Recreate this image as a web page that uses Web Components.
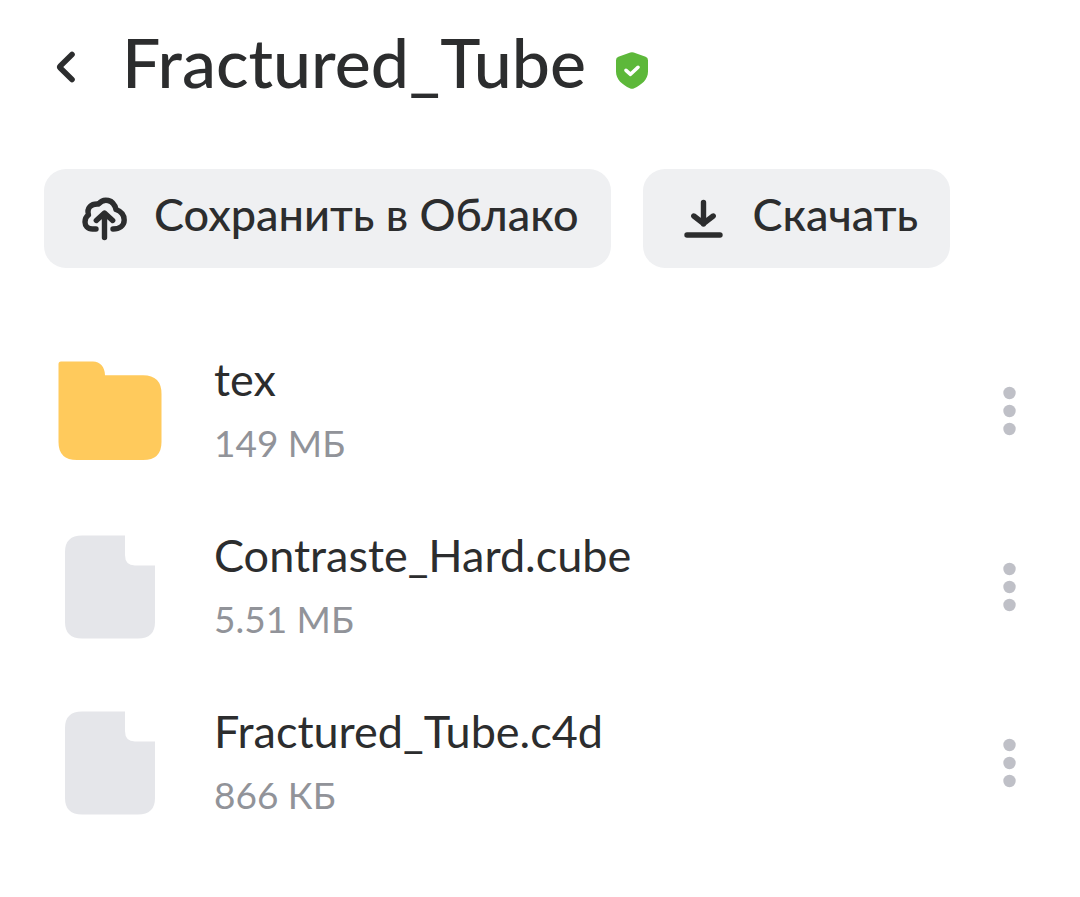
<!DOCTYPE html>
<html lang="ru">
<head>
<meta charset="utf-8">
<meta name="viewport" content="width=device-width, initial-scale=1">
<title>Fractured_Tube</title>
<style>
    :root {
        --text: #2c2d2e;
        --text-muted: #919399;
        --button: #eff0f2;
        --dots: #bfc0c7;
    }

    body {
        margin: 0;
        background: #fff;
        color: var(--text);
        font-family: Lato, "Noto Sans", sans-serif;
    }
</style>
</head>
<body>
<cloud-page>
    <cloud-header slot="header">Fractured_Tube</cloud-header>
    <cloud-button slot="actions" icon="cloud">Сохранить в Облако</cloud-button>
    <cloud-button slot="actions" icon="download">Скачать</cloud-button>
    <cloud-item type="folder">tex<span slot="size">149 МБ</span></cloud-item>
    <cloud-item type="file">Contraste_Hard.cube<span slot="size">5.51 МБ</span></cloud-item>
    <cloud-item type="file">Fractured_Tube.c4d<span slot="size">866 КБ</span></cloud-item>
</cloud-page>

<script>
const icons = {
    back: `
        <svg width="32" height="48" viewBox="0 0 32 48" aria-hidden="true">
            <path d="M20 11.500 L8.300 23 Q7.300 24 8.300 25 L20 36.500" fill="none" stroke="currentColor" stroke-width="5.600" stroke-linecap="round" stroke-linejoin="round"/>
        </svg>`,
    shield: `
        <svg width="32" height="37" viewBox="0 0 32 37" role="img" aria-label="Проверено">
            <path d="M14.3 .6 Q16 -.1 17.7 .6 L29.6 4.8 Q32 5.7 32 8.3 V19.5 C32 27.5 25.5 33 18.2 36.2 Q16 37.2 13.8 36.2 C6.5 33 0 27.5 0 19.5 V8.3 Q0 5.7 2.4 4.8 Z" fill="#5db83a"/>
            <path d="M10 18.3 L14.5 22.3 L22 15.3" fill="none" stroke="#fff" stroke-width="3.600" stroke-linecap="round" stroke-linejoin="round"/>
        </svg>`,
    cloud: `
        <svg width="48" height="48" viewBox="0 0 48 48" aria-hidden="true">
            <g fill="none" stroke="currentColor" stroke-width="5.4" stroke-linecap="round" stroke-linejoin="round">
                <path d="M16 34 H12.5 C7.5 34 5 30.500 5 27 C5 23.500 6.5 21.3 8.5 19.9 C6.5 13 11 8.5 18.5 9.1 C23.5 2.8 33.5 4 36 14.5 C41.5 16.5 44.2 20.5 44.2 25 C44.2 30.5 39.5 34 33 34"/>
                <path d="M24.5 42.500 V19 M16.3 25.5 L24.5 18 L32.7 25.5"/>
            </g>
            <path d="M18.5 24 L24.5 18 L30.5 24 Z" fill="currentColor"/>
        </svg>`,
    download: `
        <svg width="48" height="48" viewBox="0 0 48 48" aria-hidden="true">
            <g fill="none" stroke="currentColor" stroke-width="5.4" stroke-linecap="round" stroke-linejoin="round">
                <path d="M24.5 7.5 V29 M14.8 21 L24.5 28.5 L34.2 21"/>
                <path d="M8 40 H41"/>
            </g>
            <path d="M18 23.5 L24.5 29.5 L31 23.5 Z" fill="currentColor"/>
        </svg>`,
    folder: `
        <svg width="104" height="100" viewBox="0 0 104 100" aria-hidden="true">
            <path d="M.5 3 Q.5 .5 3 .5 H35 C42 .5 47 6 47 14.3 H85 Q103.500 14.3 103.500 33 V81 Q103.500 99 85 99 H19 Q.5 99 .5 81 Z" fill="#ffca5c"/>
        </svg>`,
    file: `
        <svg width="90" height="104" viewBox="0 0 90 104" aria-hidden="true">
            <path d="M17 .5 H60 V20 Q60 30.500 70 30.500 H90 V87 Q90 103.500 73 103.500 H17 Q0 103.500 0 87 V17 Q0 .5 17 .5 Z" fill="#e5e6ea"/>
        </svg>`,
    more: `
        <svg width="16" height="56" viewBox="0 0 16 56" aria-hidden="true">
            <g fill="currentColor">
                <circle cx="7.500" cy="10" r="6.200"/>
                <circle cx="7.500" cy="28" r="6.200"/>
                <circle cx="7.500" cy="46" r="6.200"/>
            </g>
        </svg>`
};

class CloudPage extends HTMLElement {

    constructor() {
        super();
        this.attachShadow({ mode: "open" }).innerHTML = `
            <style>
                :host {
                    display: block;
                    padding: 22px 44px;
                }
                .actions {
                    display: flex;
                    flex-wrap: wrap;
                    gap: 32px;
                    margin: 67px 0 55px;
                }
            </style>
            <slot name="header"></slot>
            <div class="actions"><slot name="actions"></slot></div>
            <main><slot></slot></main>
        `;
    }
}

class CloudHeader extends HTMLElement {

    constructor() {
        super();
        this.attachShadow({ mode: "open" }).innerHTML = `
            <style>
                :host {
                    display: flex;
                    align-items: center;
                }
                a {
                    display: flex;
                    padding: 0 38px 0 8px;
                    margin-top: 10px;
                    color: inherit;
                }
                h1 {
                    margin: 0 30px 0 0;
                    font-size: 68px;
                    line-height: 80px;
                    font-weight: 500;
                }
                .badge {
                    display: flex;
                    margin-top: 16px;
                }
            </style>
            <a href="#" aria-label="Назад">${icons.back}</a>
            <h1><slot></slot></h1>
            <span class="badge">${icons.shield}</span>
        `;
    }
}

class CloudButton extends HTMLElement {

    constructor() {
        super();
        this.attachShadow({ mode: "open" });
        this.build();
    }

    build() {
        this.shadowRoot.innerHTML = `
            <style>
                :host {
                    display: block;
                }
                button {
                    display: flex;
                    align-items: center;
                    gap: 26px;
                    height: 99px;
                    padding: 0 32px 0 36px;
                    border: 0;
                    border-radius: 22px;
                    background: var(--button);
                    color: inherit;
                    font: inherit;
                    font-size: 45px;
                    font-weight: 500;
                    line-height: 56px;
                    white-space: nowrap;
                    cursor: pointer;
                }
                .label {
                    padding-bottom: 10px;
                }
            </style>
            <button type="button">
                ${icons[this.getAttribute("icon")]}
                <span class="label"><slot></slot></span>
            </button>
        `;
    }
}

class CloudItem extends HTMLElement {

    constructor() {
        super();
        this.attachShadow({ mode: "open" });
        this.build();
    }

    build() {
        this.shadowRoot.innerHTML = `
            <style>
                :host {
                    display: flex;
                    align-items: center;
                    height: 176px;
                }
                .icon {
                    display: flex;
                    justify-content: center;
                    width: 132px;
                    margin-right: 38px;
                }
                .info {
                    flex: 1;
                    min-width: 0;
                    line-height: 64px;
                }
                .name {
                    font-size: 45px;
                }
                .size {
                    font-size: 37px;
                    color: var(--text-muted);
                }
                button {
                    display: flex;
                    padding: 8px 18px;
                    border: 0;
                    background: none;
                    color: var(--dots);
                    cursor: pointer;
                }
            </style>
            <div class="icon">${icons[this.getAttribute("type")]}</div>
            <div class="info">
                <div class="name"><slot></slot></div>
                <div class="size"><slot name="size"></slot></div>
            </div>
            <button type="button" aria-label="Ещё">${icons.more}</button>
        `;
    }
}

customElements.define("cloud-page", CloudPage);
customElements.define("cloud-header", CloudHeader);
customElements.define("cloud-button", CloudButton);
customElements.define("cloud-item", CloudItem);
</script>
</body>
</html>
